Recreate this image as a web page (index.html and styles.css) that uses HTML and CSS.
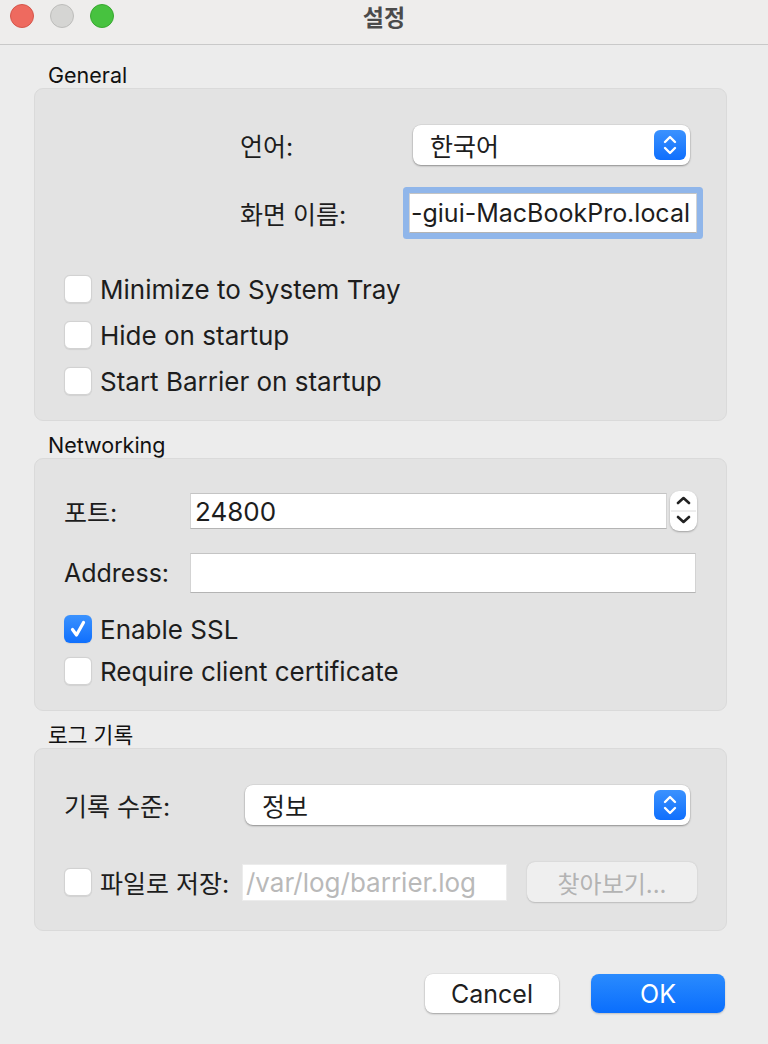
FILE: index.html
```html
<!DOCTYPE html>
<html lang="ko">
<head>
    <meta charset="UTF-8">
    <meta name="viewport" content="width=device-width, initial-scale=1.0">
    <title>설정</title>
    <link rel="stylesheet" href="styles.css">
</head>
<body>
    <div class="window">
        <div class="titlebar">
            <div class="lights">
                <span class="light red"></span>
                <span class="light gray"></span>
                <span class="light green"></span>
            </div>
            <div class="title">설정</div>
            <div></div>
        </div>

        <div class="content">
            <!-- General -->
            <div class="group-label first">General</div>
            <div class="group general">
                <div class="gen-row">
                    <span class="lbl lang-lbl">언어:</span>
                    <div class="popup lang-popup">
                        <span>한국어</span>
                        <span class="popup-arrows">
                            <svg width="32" height="30" viewBox="0 0 32 30"><path d="M11 12 L16 7 L21 12 M11 18 L16 23 L21 18" fill="none" stroke="#fff" stroke-width="2.4" stroke-linecap="round" stroke-linejoin="round"/></svg>
                        </span>
                    </div>
                </div>
                <div class="gen-row name-row">
                    <span class="lbl name-lbl">화면 이름:</span>
                    <div class="field focused"><span>-giui-MacBookPro.local</span></div>
                </div>
                <div class="checks">
                    <div class="check-row"><span class="cb"></span><span>Minimize to System Tray</span></div>
                    <div class="check-row"><span class="cb"></span><span>Hide on startup</span></div>
                    <div class="check-row"><span class="cb"></span><span>Start Barrier on startup</span></div>
                </div>
            </div>

            <!-- Networking -->
            <div class="group-label">Networking</div>
            <div class="group networking">
                <div class="net-row">
                    <span class="lbl net-lbl">포트:</span>
                    <div class="field port-field"><span>24800</span></div>
                    <div class="stepper">
                        <svg width="27" height="40" viewBox="0 0 27 40"><path d="M8 12 L13.5 7 L19 12 M8 26 L13.5 31 L19 26" fill="none" stroke="#222" stroke-width="2.6" stroke-linecap="round" stroke-linejoin="round"/><line x1="1" y1="20" x2="26" y2="20" stroke="#dcdcdc" stroke-width="1"/></svg>
                    </div>
                </div>
                <div class="net-row addr-row">
                    <span class="lbl net-lbl">Address:</span>
                    <div class="field addr-field"></div>
                </div>
                <div class="check-row ssl-row">
                    <span class="cb checked">
                        <svg width="28" height="28" viewBox="0 0 28 28"><path d="M8.5 14.5 L12.5 20 L19.5 7.5" fill="none" stroke="#fff" stroke-width="3.2" stroke-linecap="round" stroke-linejoin="round"/></svg>
                    </span>
                    <span>Enable SSL</span>
                </div>
                <div class="check-row cert-row"><span class="cb"></span><span>Require client certificate</span></div>
            </div>

            <!-- Logging -->
            <div class="group-label">로그 기록</div>
            <div class="group logging">
                <div class="log-row">
                    <span class="lbl log-lbl">기록 수준:</span>
                    <div class="popup level-popup">
                        <span>정보</span>
                        <span class="popup-arrows">
                            <svg width="32" height="30" viewBox="0 0 32 30"><path d="M11 12 L16 7 L21 12 M11 18 L16 23 L21 18" fill="none" stroke="#fff" stroke-width="2.4" stroke-linecap="round" stroke-linejoin="round"/></svg>
                        </span>
                    </div>
                </div>
                <div class="file-row">
                    <span class="cb"></span>
                    <span class="file-lbl">파일로 저장:</span>
                    <div class="field file-field"><span class="placeholder">/var/log/barrier.log</span></div>
                    <div class="browse-btn">찾아보기...</div>
                </div>
            </div>

            <div class="buttons">
                <div class="btn cancel">Cancel</div>
                <div class="btn ok">OK</div>
            </div>
        </div>
    </div>
</body>
</html>
```

FILE: styles.css
```css
body {
    margin: 0;
    background-color: #ececec;
    font-family: "Inter", "Noto Sans CJK KR", sans-serif;
    color: #1d1d1d;
}
.window {
    width: 768px;
    height: 1044px;
    background-color: #ececec;
    overflow: hidden;
}

/* title bar */
.titlebar {
    height: 40px;
    padding-top: 4px;
    display: grid;
    grid-template-columns: 1fr auto 1fr;
    align-items: start;
    background-color: #eeedec;
    border-bottom: 1px solid #c9c9c9;
}
.lights {
    display: flex;
    gap: 16px;
    padding-left: 10px;
}
.light {
    width: 22px;
    height: 22px;
    border-radius: 50%;
    border: 1px solid transparent;
}
.red {
    background-color: #ee6a5f;
    border-color: #d5564b;
}
.gray {
    background-color: #d5d5d3;
    border-color: #bdbdbb;
}
.green {
    background-color: #47c23f;
    border-color: #38a830;
}
.title {
    font-family: "Noto Sans CJK KR", sans-serif;
    font-weight: bold;
    font-size: 23px;
    line-height: 24px;
    color: #4b4b4b;
}

/* content */
.content {
    padding: 0 41px 0 34px;
}
.group-label {
    font-family: "Inter", "Noto Sans CJK KR", sans-serif;
    font-size: 21.5px;
    line-height: 26px;
    height: 26px;
    padding-left: 14px;
    margin-top: 11px;
    color: #111;
}
.group-label.first {
    margin-top: 17px;
}
.group {
    box-sizing: border-box;
    background-color: #e3e3e3;
    border: 1px solid #dadada;
    border-radius: 9px;
}
.lbl {
    font-size: 25px;
    flex-shrink: 0;
}

/* popup button */
.popup {
    height: 40px;
    box-sizing: border-box;
    background-color: #fff;
    border-radius: 8px;
    box-shadow: 0 1px 2px rgba(0, 0, 0, 0.35), 0 0 0 0.5px rgba(0, 0, 0, 0.08);
    display: flex;
    align-items: center;
    justify-content: space-between;
    padding: 0 4px 0 17px;
    font-size: 25px;
}
.popup-arrows {
    width: 32px;
    height: 30px;
    border-radius: 6px;
    background: linear-gradient(#3b92fe, #0f6ffd);
    display: flex;
}

/* text fields */
.field {
    box-sizing: border-box;
    height: 40px;
    background-color: #fff;
    border: 1px solid #d3d3d3;
    border-top-color: #c4c4c4;
    border-bottom-color: #b4b4b4;
    display: flex;
    align-items: center;
    font-size: 26px;
    overflow: hidden;
    white-space: nowrap;
}
.field.focused {
    justify-content: flex-end;
    padding-right: 6px;
    border-radius: 1px;
    box-shadow: 0 0 0 6px #90b6ea;
}

/* general */
.general {
    padding: 36px 0 25px 205px;
}
.gen-row {
    display: flex;
    align-items: center;
}
.lang-lbl {
    width: 173px;
}
.lang-popup {
    width: 277px;
}
.name-row {
    margin-top: 28px;
}
.name-lbl {
    width: 169px;
}
.name-row .field {
    width: 288px;
    font-size: 25px;
}
.checks {
    margin-top: 42px;
    margin-left: -176px;
    display: flex;
    flex-direction: column;
    gap: 18px;
}
.check-row {
    display: flex;
    align-items: center;
    gap: 8px;
    height: 28px;
    font-size: 26px;
}
.cb {
    box-sizing: border-box;
    width: 28px;
    height: 28px;
    border-radius: 6px;
    background-color: #fff;
    border: 1px solid #d2d2d2;
    box-shadow: 0 0.5px 1px rgba(0, 0, 0, 0.08);
    flex-shrink: 0;
    display: flex;
}
.cb.checked {
    border: none;
    background: linear-gradient(#3b92fe, #0f6ffd);
}

/* networking */
.networking {
    padding: 32px 0 25px 29px;
}
.net-row {
    display: flex;
    align-items: center;
    height: 40px;
}
.net-lbl {
    width: 126px;
}
.port-field {
    width: 477px;
    height: 36px;
    padding-left: 4px;
}
.stepper {
    margin-left: 3px;
    width: 27px;
    height: 40px;
    border-radius: 9px;
    background-color: #fff;
    box-shadow: 0 1px 2px rgba(0, 0, 0, 0.3);
    display: flex;
}
.addr-row {
    margin-top: 22px;
}
.addr-field {
    width: 506px;
}
.ssl-row {
    margin-top: 22px;
}
.cert-row {
    margin-top: 14px;
}

/* logging */
.logging {
    padding: 36px 0 28px 29px;
}
.log-row {
    display: flex;
    align-items: center;
}
.log-lbl {
    width: 181px;
}
.level-popup {
    width: 445px;
}
.file-row {
    margin-top: 37px;
    height: 40px;
    display: flex;
    align-items: center;
}
.file-lbl {
    font-size: 25px;
    margin-left: 8px;
    width: 142px;
}
.file-field {
    width: 265px;
    height: 37px;
    border-color: #ececec;
    padding-left: 3px;
}
.placeholder {
    color: #b9b9b9;
}
.browse-btn {
    margin-left: 20px;
    width: 170px;
    height: 40px;
    box-sizing: border-box;
    border-radius: 8px;
    background-color: #efefef;
    box-shadow: 0 0.5px 1.5px rgba(0, 0, 0, 0.18);
    color: #b3b3b3;
    font-size: 24px;
    display: flex;
    align-items: center;
    justify-content: center;
}

/* bottom buttons */
.buttons {
    margin-top: 43px;
    display: flex;
    justify-content: flex-end;
    gap: 32px;
    padding-right: 2px;
}
.btn {
    width: 134px;
    height: 39px;
    border-radius: 8px;
    display: flex;
    align-items: center;
    justify-content: center;
    font-size: 25px;
}
.cancel {
    background-color: #fff;
    color: #1e1e1e;
    box-shadow: 0 1px 2px rgba(0, 0, 0, 0.3), 0 0 0 0.5px rgba(0, 0, 0, 0.06);
}
.ok {
    background: linear-gradient(#2a8bfe, #0a6efd);
    color: #fff;
    box-shadow: 0 1px 2px rgba(0, 0, 0, 0.2);
}
```
